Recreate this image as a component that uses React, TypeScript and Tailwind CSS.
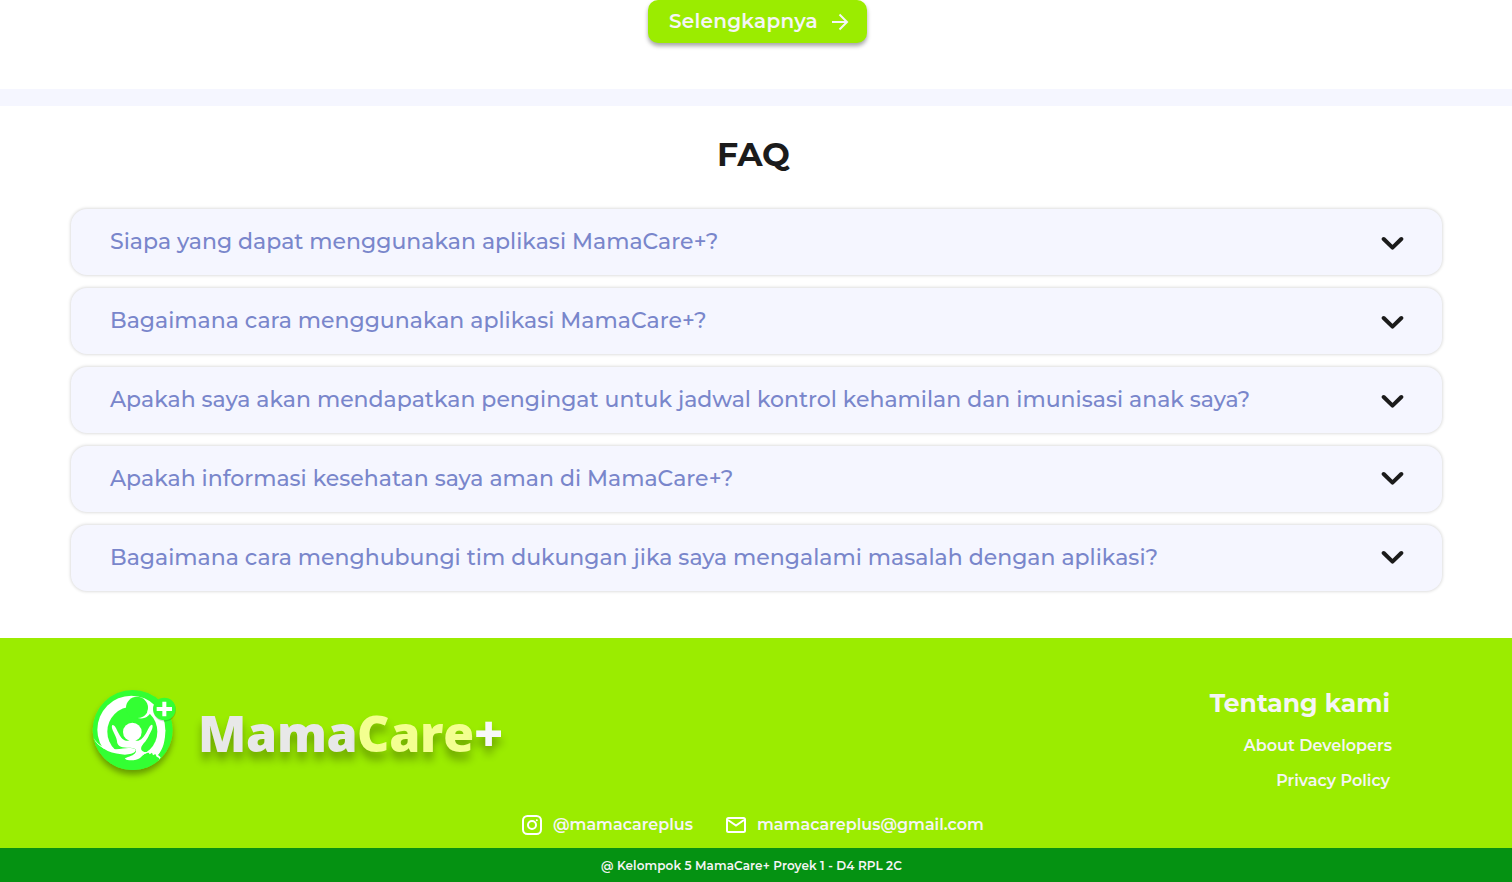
import React from "react";

const faqs = [
  { q: "Siapa yang dapat menggunakan aplikasi MamaCare+?", icon: "mt-1" },
  { q: "Bagaimana cara menggunakan aplikasi MamaCare+?", icon: "mt-1" },
  { q: "Apakah saya akan mendapatkan pengingat untuk jadwal kontrol kehamilan dan imunisasi anak saya?", icon: "mt-1" },
  { q: "Apakah informasi kesehatan saya aman di MamaCare+?", icon: "" },
  { q: "Bagaimana cara menghubungi tim dukungan jika saya mengalami masalah dengan aplikasi?", icon: "" },
];

function Chevron({ className }: { className: string }) {
  return (
    <svg viewBox="0 0 24 14" className={`h-[14px] w-6 ${className}`} fill="none" stroke="#1b1b1b" strokeWidth="4" strokeLinecap="round" strokeLinejoin="round">
      <path d="M3.7 3 12.5 11.6 21.3 3" />
    </svg>
  );
}

function Logo() {
  return (
    <svg viewBox="0 0 330 315" className="h-[105px] w-[110px] shrink-0 overflow-visible">
      <defs>
        <filter id="drop" x="-20%" y="-20%" width="140%" height="150%">
          <feDropShadow dx="0" dy="14" stdDeviation="9" floodColor="#000" floodOpacity="0.35" />
        </filter>
        <clipPath id="disc">
          <circle cx="158" cy="150" r="120" />
        </clipPath>
      </defs>
      <circle cx="158" cy="150" r="120" fill="#33ff33" filter="url(#drop)" />
      <g clipPath="url(#disc)">
        <circle cx="154" cy="149" r="102" fill="#fff" />
        <path fill="#fff" d="M256 149c0 32-6 58-22 76l8 7-6 10-10-8-24-8z" />
        <circle cx="157" cy="155" r="75" fill="#33ff33" />
        <path fill="#33ff33" d="M36 175c16 20 29 31 49 35 25 5 53-5 76-3 12 2 10 14-1 20-13 6-24 8-24 10 5 5 32 6 44-3 10-10 18-15 25-17l4 6 7-5 3 8 7-4 4 8 6 3 5 8-30 36H75L36 235z" />
        <circle cx="171" cy="83" r="33" fill="#33ff33" />
        <path fill="#fff" d="M204 80c2 18-10 33-31 34 22 5 40-7 41-28z" />
        <path fill="#fff" d="M40 173c16 24 31 30 53 33 20 4 39-2 52-2 20 0 25 5 21 10-6 8-27 12-42 9-20-3-38-7-52-17-15-9-26-19-32-33z" />
        <circle cx="157" cy="156" r="28" fill="#fff" />
        <path fill="#fff" d="M97 135c8-1 12 12 17 22 7 13 12 23 24 25h37c13-4 20-16 28-32 5-10 10-18 14-15 4 7-6 23-12 35-8 16-16 20-21 31-4 14 11 17 24 15l5 1c-22 3-31 10-41 19-14 6-31 5-38-1 13-5 28-8 33-18 5-11-5-14-22-14-23 1-34-7-34-20-2-17-21-39-14-48z" />
      </g>
      <circle cx="254" cy="91" r="34" fill="#000" fillOpacity=".15" />
      <circle cx="253" cy="87" r="34" fill="#33ff33" />
      <path d="M253 65v44M230 87h46" stroke="#fff" strokeWidth="12" />
    </svg>
  );
}

export default function App() {
  return (
    <div className="flex h-[882px] w-full flex-col overflow-hidden bg-white font-['Montserrat',sans-serif]">
      <section className="flex h-[89px] shrink-0 items-start justify-center pl-[3px]">
        <button className="flex h-[43px] w-[219px] items-center rounded-[10px] bg-[#9bec00] pl-[21px] text-xl font-semibold tracking-[0.25px] text-[#f5f5f5] shadow-[0_3px_4px_rgba(0,0,0,0.35)]">
          <span className="w-[162px] pb-0.5 text-left">Selengkapnya</span>
          <svg viewBox="0 0 18 18" className="mt-px h-[18px] w-[18px]" fill="none" stroke="currentColor" strokeWidth="2">
            <path d="M1 9h15M8.5 1.5 16 9l-7.5 7.5" />
          </svg>
        </button>
      </section>
      <div className="h-[17px] shrink-0 bg-[#f5f6ff]" />
      <section className="flex h-[532px] shrink-0 flex-col px-[71px] pt-7">
        <h2 className="pr-[5px] text-center text-[33px] leading-10 font-bold text-[#1b1b1b]">FAQ</h2>
        <div className="mt-[35px] flex flex-col gap-[13px]">
          {faqs.map((f) => (
            <button key={f.q} className="flex h-[66px] w-[1371px] items-center justify-between rounded-2xl bg-[#f5f6ff] pr-[38px] pb-0.5 pl-[39px] text-left text-[22px] font-medium tracking-[0.008px] text-[#7986cb] shadow-[0_0_3px_1px_rgba(0,0,0,0.13)]">
              <span>{f.q}</span>
              <Chevron className={f.icon} />
            </button>
          ))}
        </div>
      </section>
      <footer className="flex h-[210px] shrink-0 flex-col bg-[#9bec00] text-base font-semibold text-[#f5f5f5]">
        <div className="flex h-[170px] items-start justify-between pr-[122px] pl-20">
          <div className="flex pt-[42px]">
            <Logo />
            <div className="mt-[18px] ml-2 flex text-[50px] leading-[70px] font-extrabold tracking-[-0.3px] font-['Open_Sans',sans-serif]">
              <span className="w-[159px] text-[#e8e8e8] [text-shadow:0_8px_8px_rgba(0,0,0,0.3)]">Mama</span>
              <span className="w-[117px] text-[#f3ff90] [text-shadow:0_8px_8px_rgba(0,0,0,0.3)]">Care</span>
              <span className="text-[#f8f8f8] [text-shadow:0_8px_8px_rgba(0,0,0,0.3)]">+</span>
            </div>
          </div>
          <nav className="flex flex-col items-end pt-[49px]">
            <h3 className="text-[25px] leading-8 font-bold">Tentang kami</h3>
            <a className="-mr-0.5 mt-[17px] leading-5">About Developers</a>
            <a className="mt-[15px] leading-5">Privacy Policy</a>
          </nav>
        </div>
        <div className="flex h-[34px] items-center pl-[522px]">
          <svg viewBox="0 0 20 20" className="h-5 w-5" fill="none" stroke="#fff" strokeWidth="2">
            <rect x="1" y="1" width="18" height="18" rx="4.5" />
            <circle cx="10" cy="10" r="4" />
            <circle cx="14.8" cy="5.2" r="1" fill="#fff" stroke="none" />
          </svg>
          <span className="ml-[11px] w-[173px]">@mamacareplus</span>
          <svg viewBox="0 0 20 16" className="h-4 w-5" fill="none" stroke="#fff" strokeWidth="2">
            <rect x="1" y="1" width="18" height="14" rx="1.5" />
            <path d="m2 3 8 5.5L18 3" />
          </svg>
          <span className="ml-[11px]">mamacareplus@gmail.com</span>
        </div>
      </footer>
      <div className="flex h-[34px] shrink-0 items-center justify-center bg-[#059212] pt-0.5 pr-[9px] text-xs font-semibold tracking-[0.09px] text-[#f5f5f5]">
        @ Kelompok 5 MamaCare+ Proyek 1 - D4 RPL 2C
      </div>
    </div>
  );
}
